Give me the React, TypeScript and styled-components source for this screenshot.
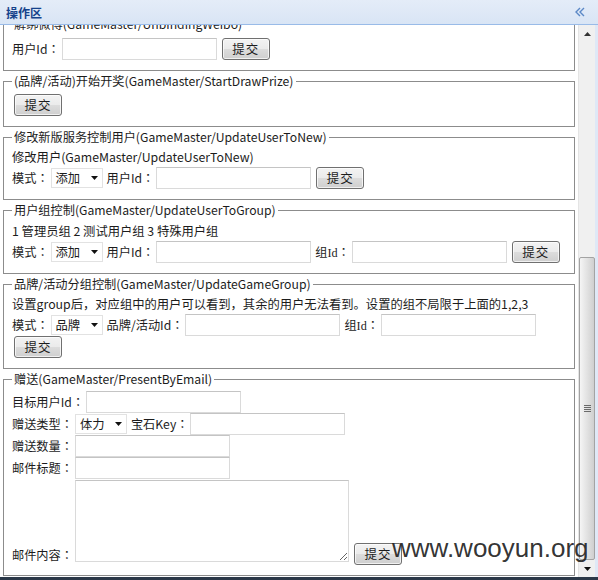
import styled, { createGlobalStyle } from "styled-components";

const GlobalStyle = createGlobalStyle`
  html, body {
    margin: 0;
    padding: 0;
  }
  body {
    background: #2f3c4c;
    font-family: "Noto Sans CJK SC", "Liberation Sans", sans-serif;
    color: #1c1c1c;
  }
`;

const Window = styled.div`
  position: relative;
  width: 598px;
  height: 577px;
  background: #fff;
  display: flex;
  flex-direction: column;
  overflow: hidden;
`;

const Header = styled.div`
  height: 24px;
  flex: none;
  border-bottom: 1px solid #99bbe8;
  background: linear-gradient(#e4ecf8, #d9e5f5);
  display: flex;
  align-items: center;
  justify-content: space-between;
  padding: 0 13px 0 6px;
`;

const Title = styled.span`
  font-size: 12px;
  font-weight: bold;
  color: #15428b;
`;

const Body = styled.div`
  flex: 1;
  min-height: 0;
  display: flex;
`;

const Content = styled.div`
  flex: 1;
  min-width: 0;
  overflow: hidden;
  padding: 0 3px;
`;

const Scrolled = styled.div`
  margin-top: -9px;
`;

const Set = styled.fieldset<{ $top?: number }>`
  margin: 0 0 2px;
  padding: ${(p) => p.$top ?? 3}px 8px 10px;
  border: 1px solid #8c8c8c;
  min-width: 0;
`;

const Legend = styled.legend`
  padding: 0 2px;
  font-size: 12.2px;
  line-height: 16px;
  color: #1c1c1c;
`;

const Note = styled.div`
  font-size: 12.3px;
  line-height: 20px;
  white-space: nowrap;
`;

const Row = styled.div<{ $lead?: number }>`
  display: flex;
  align-items: center;
  gap: 4px;
  height: 22px;
  padding-left: ${(p) => p.$lead ?? 0}px;
`;

const AreaRow = styled.div`
  display: flex;
  align-items: flex-end;
  gap: 4px;
`;

const Label = styled.span<{ $serif?: boolean }>`
  font-size: 12.2px;
  line-height: 20px;
  white-space: nowrap;
  margin-right: -2px;
  font-family: ${(p) =>
    p.$serif
      ? `"Liberation Serif", "Noto Sans CJK SC", serif`
      : `"Noto Sans CJK SC", "Liberation Sans", sans-serif`};
`;

const Colon = styled.span`
  font-family: "Noto Sans CJK TC", sans-serif;
`;

const Input = styled.input<{ $w?: number }>`
  width: ${(p) => p.$w ?? 155}px;
  height: 22px;
  box-sizing: border-box;
  margin: 0;
  padding: 0 3px;
  border: 1px solid #dadada;
  border-top-color: #c4c4c4;
  outline: none;
  font: 12px "Noto Sans CJK SC", sans-serif;
`;

const TextArea = styled.textarea`
  width: 274px;
  height: 82px;
  box-sizing: border-box;
  margin: 1px 0 3px;
  padding: 2px 3px;
  border: 1px solid #dadada;
  border-top-color: #c4c4c4;
  outline: none;
  resize: both;
  font: 12px "Noto Sans CJK SC", sans-serif;
`;

const Btn = styled.button`
  width: 48px;
  height: 22px;
  box-sizing: border-box;
  margin: 0 0 0 1px;
  padding: 0 0 1px;
  border: 1px solid #707070;
  border-radius: 3px;
  background: linear-gradient(#f3f3f3 0%, #ebebeb 48%, #dcdcdc 52%, #cfcfcf 100%);
  box-shadow: inset 0 0 0 1px rgba(255, 255, 255, 0.7);
  font: 12.5px "Noto Sans CJK SC", sans-serif;
  letter-spacing: 1px;
  color: #1c1c1c;
`;

const Select = styled.div`
  width: 52px;
  height: 20px;
  box-sizing: border-box;
  border: 1px solid #e2e2e2;
  display: flex;
  align-items: center;
  justify-content: space-between;
  padding: 0 4px 0 4px;
  font-size: 12.3px;
  line-height: 18px;
  background: #fff;
`;

const ScrollBar = styled.div`
  width: 20px;
  flex: none;
  box-sizing: border-box;
  display: flex;
  flex-direction: column;
  background: #f0f0f0;
  border-left: 1px solid #e4e4e4;
  border-right: 3px solid #dfe8f6;
`;

const ArrowBtn = styled.div`
  height: 17px;
  flex: none;
  display: flex;
  align-items: center;
  justify-content: center;
`;

const Track = styled.div`
  flex: 1;
  display: flex;
  flex-direction: column;
  justify-content: flex-end;
`;

const Thumb = styled.div`
  height: 303px;
  box-sizing: border-box;
  border: 1px solid #a3a3a3;
  border-radius: 2px;
  background: linear-gradient(90deg, #f5f5f5, #e2e2e2 50%, #cfcfcf);
  display: flex;
  align-items: center;
  justify-content: center;
`;

const Watermark = styled.div`
  position: absolute;
  left: 392px;
  top: 535px;
  font-family: "Liberation Sans", Arial, sans-serif;
  font-size: 26px;
  line-height: 26px;
  color: rgba(34, 34, 34, 0.92);
  pointer-events: none;
`;

const Bottom = styled.div`
  height: 3px;
  width: 598px;
  background: #2b3848;
`;

function Caret() {
  return (
    <svg width="7" height="4" viewBox="0 0 7 4">
      <path d="M0 0h7L3.5 4z" fill="#111" />
    </svg>
  );
}

function Drop({ value }: { value: string }) {
  return (
    <Select>
      <span>{value}</span>
      <Caret />
    </Select>
  );
}

function Collapse() {
  return (
    <svg width="10" height="10" viewBox="0 0 10 10">
      <path d="M5 1L1 5l4 4M9 1L5 5l4 4" fill="none" stroke="#5b88c6" strokeWidth="1.4" />
    </svg>
  );
}

function Field({ text, serif }: { text: string; serif?: boolean }) {
  return (
    <Label $serif={serif}>
      {text}
      <Colon>：</Colon>
    </Label>
  );
}

export default function App() {
  return (
    <>
      <GlobalStyle />
      <Window>
        <Header>
          <Title>操作区</Title>
          <Collapse />
        </Header>
        <Body>
          <Content>
            <Scrolled>
              <Set $top={6}>
                <Legend>解绑微博(GameMaster/UnbindingWeibo)</Legend>
                <Row>
                  <Field text="用户Id" />
                  <Input />
                  <Btn>提交</Btn>
                </Row>
              </Set>

              <Set $top={5}>
                <Legend>(品牌/活动)开始开奖(GameMaster/StartDrawPrize)</Legend>
                <Row $lead={1}>
                  <Btn>提交</Btn>
                </Row>
              </Set>

              <Set $top={2}>
                <Legend>修改新版服务控制用户(GameMaster/UpdateUserToNew)</Legend>
                <Note>修改用户(GameMaster/UpdateUserToNew)</Note>
                <Row>
                  <Field text="模式" />
                  <Drop value="添加" />
                  <Field text="用户Id" />
                  <Input />
                  <Btn>提交</Btn>
                </Row>
              </Set>

              <Set>
                <Legend>用户组控制(GameMaster/UpdateUserToGroup)</Legend>
                <Note>1 管理员组 2 测试用户组 3 特殊用户组</Note>
                <Row>
                  <Field text="模式" />
                  <Drop value="添加" />
                  <Field text="用户Id" />
                  <Input />
                  <Field text="组Id" serif />
                  <Input />
                  <Btn>提交</Btn>
                </Row>
              </Set>

              <Set $top={2}>
                <Legend>品牌/活动分组控制(GameMaster/UpdateGameGroup)</Legend>
                <Note>设置group后，对应组中的用户可以看到，其余的用户无法看到。设置的组不局限于上面的1,2,3</Note>
                <Row>
                  <Field text="模式" />
                  <Drop value="品牌" />
                  <Field text="品牌/活动Id" />
                  <Input />
                  <Field text="组Id" serif />
                  <Input />
                </Row>
                <Row $lead={1}>
                  <Btn>提交</Btn>
                </Row>
              </Set>

              <Set $top={4}>
                <Legend>赠送(GameMaster/PresentByEmail)</Legend>
                <Row>
                  <Field text="目标用户Id" />
                  <Input />
                </Row>
                <Row>
                  <Field text="赠送类型" />
                  <Drop value="体力" />
                  <Field text="宝石Key" />
                  <Input />
                </Row>
                <Row>
                  <Field text="赠送数量" />
                  <Input />
                </Row>
                <Row>
                  <Field text="邮件标题" />
                  <Input />
                </Row>
                <AreaRow>
                  <Field text="邮件内容" />
                  <TextArea />
                  <Btn>提交</Btn>
                </AreaRow>
              </Set>
            </Scrolled>
          </Content>
          <ScrollBar>
            <ArrowBtn>
              <svg width="7" height="4" viewBox="0 0 7 4">
                <path d="M0 4h7L3.5 0z" fill="#333" />
              </svg>
            </ArrowBtn>
            <Track>
              <Thumb>
                <svg width="7" height="7" viewBox="0 0 7 7">
                  <path d="M0 .5h7M0 2.5h7M0 4.5h7M0 6.5h7" stroke="#6a6a6a" strokeWidth="1" />
                </svg>
              </Thumb>
            </Track>
            <ArrowBtn>
              <Caret />
            </ArrowBtn>
          </ScrollBar>
        </Body>
        <Watermark>www.wooyun.org</Watermark>
      </Window>
      <Bottom />
    </>
  );
}
